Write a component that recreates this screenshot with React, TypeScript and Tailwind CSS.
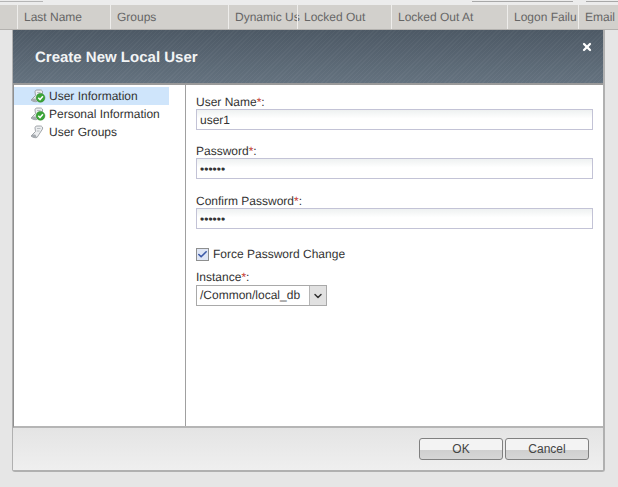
import { ChevronDown, Check, X } from "lucide-react";

const columns = [
  { label: "Last Name", width: "w-[93px]" },
  { label: "Groups", width: "w-[118px]" },
  { label: "Dynamic Us", width: "w-[69px]" },
  { label: "Locked Out", width: "w-[94px]" },
  { label: "Locked Out At", width: "w-[116px]" },
  { label: "Logon Failu", width: "w-[71px]" },
  { label: "Email", width: "w-[40px]" },
];

const navItems = [
  { label: "User Information", done: true, active: true },
  { label: "Personal Information", done: true, active: false },
  { label: "User Groups", done: false, active: false },
];

const fields = [
  { label: "User Name", value: "user1", mt: "mt-[10px]" },
  { label: "Password", value: "••••••", mt: "mt-[14px]" },
  { label: "Confirm Password", value: "••••••", mt: "mt-[15px]" },
];

function ScrollIcon({ done }: { done: boolean }) {
  return (
    <svg width="17" height="14" viewBox="0 0 17 14" className="shrink-0">
      <path d="M1 11 C3 12.5 5 13 7 12.5 L12.5 4 C13 2.5 12 1 10.5 1 L7 1 C5.5 1 5 2 5 3 L5.5 6.5 Z" fill="#eceef0" stroke="#8b9096" strokeWidth="0.8" />
      <path d="M7 3.5 L10.5 3.5 M6.8 6 L9.5 6" stroke="#a4a9ae" strokeWidth="0.7" />
      <path d="M1 11 C2 9.2 4 9.2 5.5 9.8 C6 10.8 6.5 11.6 7 12.5 C5 13 3 12.5 1 11 Z" fill="#a6abb0" />
      {done && <circle cx="10.5" cy="8.8" r="4.4" fill="#3aa535" stroke="#2a7d28" strokeWidth="0.5" />}
      {done && <path d="M8.3 8.8 L10 10.6 L12.9 7.2" fill="none" stroke="#fff" strokeWidth="1.5" />}
    </svg>
  );
}

function Required({ label }: { label: string }) {
  return (
    <label className="block h-[14px] leading-[15px] text-[12px] text-[#333]">
      {label}
      <span className="text-[#c4372f]">*</span>:
    </label>
  );
}

export default function App() {
  return (
    <div className="h-[487px] w-[618px] overflow-hidden bg-[#e6e6e6] font-['Liberation_Sans',Arial,sans-serif] [text-rendering:geometricPrecision]">
      <div className="flex h-[5px] items-start bg-[#ececec]">
        <div className="mt-px h-px w-[43px] bg-[#b5b5b5]" />
        <div className="ml-[429px] mt-px h-px w-[101px] bg-[#a8a8a8]" />
        <div className="ml-[13px] mt-px h-px w-[32px] bg-[#a8a8a8]" />
      </div>

      <div className="flex h-[25px] overflow-hidden border-b border-[#b4b2af] bg-[#d2d0cc] pl-[17px]">
        {columns.map((col) => (
          <div
            key={col.label}
            className={`${col.width} shrink-0 whitespace-nowrap border-l border-[#eeedeb] pl-[6px] text-[12px] leading-[24px] text-[#666]`}
          >
            {col.label}
          </div>
        ))}
      </div>

      <div className="ml-3 flex h-[442px] w-[593px] flex-col rounded-b-[3px] border-r-2 border-b-2 border-l border-[#b0b0b0] bg-[#ececec]">
        <div className="relative h-[53px] shrink-0 bg-[repeating-linear-gradient(135deg,rgba(255,255,255,0.035)_0px,rgba(255,255,255,0.035)_1px,transparent_1px,transparent_3px),linear-gradient(to_bottom,#4d5965,#64727f)] pl-[22px] pt-[19px] text-[15px] font-bold leading-[18px] text-[#f2f4f5]">
          Create New Local User
          <button className="absolute right-[10px] top-[11px] text-white">
            <X size={12} strokeWidth={4.5} />
          </button>
        </div>

        <div className="flex h-[345px] shrink-0 border-t-2 border-b-2 border-l border-t-[#9a9a9a] border-b-[#b5b5b5] border-l-[#8f8f8f] bg-white">
          <nav className="w-[172px] shrink-0 border-r border-[#a0a0a0] pr-[16px] pt-[2px] text-[12px] text-[#333]">
            {navItems.map((item) => (
              <div
                key={item.label}
                className={`flex h-[18px] items-center gap-[2px] pl-[16px] ${item.active ? "bg-[#cfe5fb]" : ""}`}
              >
                <ScrollIcon done={item.done} />
                <span>{item.label}</span>
              </div>
            ))}
          </nav>

          <div className="flex-1 pl-[10px] pr-[10px]">
            {fields.map((f) => (
              <div key={f.label} className={f.mt}>
                <Required label={f.label} />
                <div className="h-[21px] border border-[#c3c3d6] bg-[linear-gradient(to_bottom,#eef1f1,#ffffff_45%)] pl-[3px] text-[12px] leading-[20px] text-[#333]">
                  {f.value}
                </div>
              </div>
            ))}

            <div className="mt-[17px] flex h-[16px] items-center gap-[4px] text-[12px] text-[#333]">
              <span className="flex h-[13px] w-[13px] items-center justify-center border border-[#8e8f8f] bg-[#dfe6f5] text-[#3d5aa8]">
                <Check size={11} strokeWidth={3.5} />
              </span>
              Force Password Change
            </div>

            <div className="mt-[8px]">
              <Required label="Instance" />
              <div className="mt-px flex h-[21px] w-[131px] border border-[#a9a9a9] bg-white text-[12px] leading-[19px] text-[#333]">
                <span className="flex-1 pl-[3px]">/Common/local_db</span>
                <span className="flex w-[17px] items-center justify-center border-l border-[#b5b5b5] bg-[#e1e1e1] text-[#333]">
                  <ChevronDown size={12} strokeWidth={3} />
                </span>
              </div>
            </div>
          </div>
        </div>

        <div className="flex flex-1 items-start justify-end gap-[2px] bg-[linear-gradient(to_bottom,#e4e4e4,#efefef)] pr-[14px] pt-[10px]">
          <button className="h-[22px] w-[84px] rounded-[3px] border border-[#808080] bg-[linear-gradient(to_bottom,#f3f3f3_0%,#f3f3f3_55%,#cfcfcf_55%,#d6d6d6_100%)] text-[12px] leading-[20px] text-[#444]">
            OK
          </button>
          <button className="h-[22px] w-[84px] rounded-[3px] border border-[#808080] bg-[linear-gradient(to_bottom,#f3f3f3_0%,#f3f3f3_55%,#cfcfcf_55%,#d6d6d6_100%)] text-[12px] leading-[20px] text-[#444]">
            Cancel
          </button>
        </div>
      </div>
    </div>
  );
}
